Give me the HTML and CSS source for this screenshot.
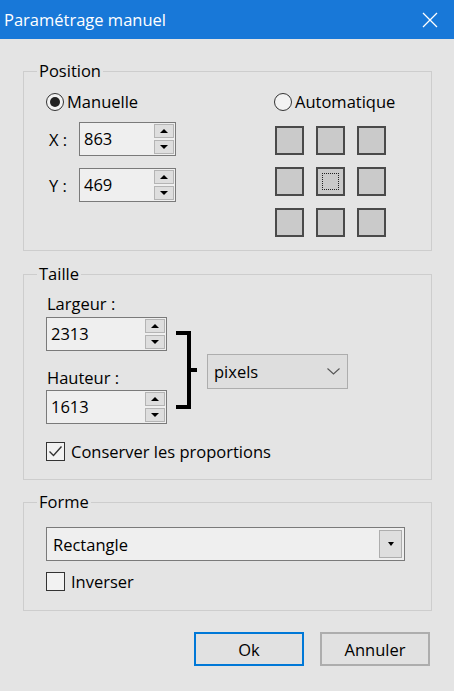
FILE: index.html
```html
<!DOCTYPE html>
<html lang="fr">
<head>
  <meta charset="UTF-8">
  <meta name="viewport" content="width=device-width, initial-scale=1.0">
  <title>Paramétrage manuel</title>
  <link rel="stylesheet" href="styles.css">
</head>
<body>
<div class="window">
  <div class="titlebar">
    <span class="title">Paramétrage manuel</span>
    <svg class="close" width="16" height="16" viewBox="0 0 16 16">
      <path d="M1 1 L15 15 M15 1 L1 15" stroke="#fff" stroke-width="1.3" fill="none" />
    </svg>
  </div>

  <div class="content">
    <!-- Position -->
    <fieldset class="group group-position">
      <legend>Position</legend>
      <div class="group-body position-body">
        <div class="manual">
          <div class="radio checked"><span class="radio-mark"></span>Manuelle</div>
          <div class="coord-row">
            <span class="coord-label">X :</span>
            <div class="spin spin-coord">
              <span class="spin-value">863</span>
              <div class="spin-buttons">
                <span class="spin-btn"><span class="arrow-up"></span></span>
                <span class="spin-btn"><span class="arrow-down"></span></span>
              </div>
            </div>
          </div>
          <div class="coord-row coord-row-y">
            <span class="coord-label">Y :</span>
            <div class="spin spin-coord">
              <span class="spin-value">469</span>
              <div class="spin-buttons">
                <span class="spin-btn"><span class="arrow-up"></span></span>
                <span class="spin-btn"><span class="arrow-down"></span></span>
              </div>
            </div>
          </div>
        </div>
        <div class="auto">
          <div class="radio"><span class="radio-mark"></span>Automatique</div>
          <div class="anchor-grid">
            <span class="anchor"></span>
            <span class="anchor"></span>
            <span class="anchor"></span>
            <span class="anchor"></span>
            <span class="anchor focused"><span class="focus-rect"></span></span>
            <span class="anchor"></span>
            <span class="anchor"></span>
            <span class="anchor"></span>
            <span class="anchor"></span>
          </div>
        </div>
      </div>
    </fieldset>

    <!-- Taille -->
    <fieldset class="group group-size">
      <legend>Taille</legend>
      <div class="group-body">
        <div class="size-row">
          <div class="size-fields">
            <div class="field-label">Largeur :</div>
            <div class="spin spin-size">
              <span class="spin-value">2313</span>
              <div class="spin-buttons">
                <span class="spin-btn"><span class="arrow-up"></span></span>
                <span class="spin-btn"><span class="arrow-down"></span></span>
              </div>
            </div>
            <div class="field-label field-label-second">Hauteur :</div>
            <div class="spin spin-size">
              <span class="spin-value">1613</span>
              <div class="spin-buttons">
                <span class="spin-btn"><span class="arrow-up"></span></span>
                <span class="spin-btn"><span class="arrow-down"></span></span>
              </div>
            </div>
          </div>
          <div class="link">
            <span class="bracket"></span>
            <span class="bracket-tick"></span>
          </div>
          <div class="combo combo-unit">
            <span class="combo-text">pixels</span>
            <svg class="chevron" width="13" height="7" viewBox="0 0 13 7">
              <path d="M0.5 0.5 L6.5 6 L12.5 0.5" stroke="#555" stroke-width="1.1" fill="none" />
            </svg>
          </div>
        </div>
        <div class="check checked">
          <span class="check-box">
            <svg width="17" height="17" viewBox="0 0 17 17">
              <path d="M2.5 8.5 L6.5 12.5 L14.5 3.5" stroke="#333" stroke-width="1.4" fill="none" />
            </svg>
          </span>
          Conserver les proportions
        </div>
      </div>
    </fieldset>

    <!-- Forme -->
    <fieldset class="group group-shape">
      <legend>Forme</legend>
      <div class="group-body">
        <div class="combo combo-shape">
          <span class="combo-text">Rectangle</span>
          <span class="drop-btn"><span class="arrow-down"></span></span>
        </div>
        <div class="check">
          <span class="check-box"></span>
          Inverser
        </div>
      </div>
    </fieldset>
  </div>

  <div class="buttons">
    <button class="btn btn-default">Ok</button>
    <button class="btn">Annuler</button>
  </div>
</div>
</body>
</html>
```

FILE: styles.css
```css
/* Base */
body {
  margin: 0;
  font-family: "Open Sans", "Noto Sans", sans-serif;
  font-size: 16.5px;
  color: #000;
  background-color: #e4e4e4;
}

.window {
  width: 454px;
  height: 691px;
  background-color: #e4e4e4;
}

/* Title bar */
.titlebar {
  height: 39px;
  background-color: #1878d8;
  display: flex;
  align-items: center;
  justify-content: space-between;
  padding: 0 16px 0 4px;
}

.title {
  color: #fff;
  font-size: 16.5px;
}

.close {
  display: block;
  margin-top: 1px;
}

/* Content */
.content {
  padding: 22px 22px 0 23px;
}

.group {
  margin: 0;
  padding: 0 0 0 13px;
  border: 1px solid #cdcdcd;
  min-width: 0;
}

.group legend {
  padding: 0 2px;
  line-height: 20px;
}

.group-body {
  padding-left: 9px;
}

/* Position */
.group-position {
  padding-top: 11px;
  padding-bottom: 13px;
}

.position-body {
  display: flex;
}

.manual {
  width: 228px;
}

.radio {
  display: flex;
  align-items: center;
  height: 20px;
  line-height: 20px;
}

.radio-mark {
  box-sizing: border-box;
  width: 18px;
  height: 18px;
  border: 1px solid #333;
  border-radius: 50%;
  background-color: #f2f2f2;
  margin-right: 3px;
  display: flex;
  align-items: center;
  justify-content: center;
}

.radio.checked .radio-mark::after {
  content: "";
  width: 10px;
  height: 10px;
  border-radius: 50%;
  background-color: #222;
}

.coord-row {
  display: flex;
  align-items: center;
  margin-top: 10px;
}

.coord-row-y {
  margin-top: 12px;
}

.coord-label {
  width: 30px;
  padding-left: 3px;
}

/* Spin boxes */
.spin {
  box-sizing: border-box;
  display: flex;
  height: 34px;
  border: 1px solid #7a7a7a;
  background-color: #efefef;
}

.spin-coord {
  width: 97px;
}

.spin-size {
  width: 121px;
}

.spin-value {
  flex: 1;
  padding-left: 4px;
  line-height: 32px;
}

.spin-buttons {
  display: flex;
  flex-direction: column;
  gap: 2px;
  padding: 1px 1px 1px 0;
}

.spin-btn {
  box-sizing: border-box;
  width: 20px;
  height: 14px;
  border: 1px solid #b4b4b4;
  background-color: #dedede;
  display: flex;
  align-items: center;
  justify-content: center;
}

.arrow-up {
  width: 0;
  height: 0;
  border-left: 4px solid transparent;
  border-right: 4px solid transparent;
  border-bottom: 4px solid #000;
}

.arrow-down {
  width: 0;
  height: 0;
  border-left: 4px solid transparent;
  border-right: 4px solid transparent;
  border-top: 4px solid #000;
}

/* Anchor grid */
.auto {
  width: 130px;
}

.anchor-grid {
  display: grid;
  grid-template-columns: repeat(3, 29px);
  grid-auto-rows: 29px;
  gap: 12px;
  margin: 14px 0 0 1px;
}

.anchor {
  box-sizing: border-box;
  border: 2px solid #4a4a4a;
  background-color: #cacaca;
  display: flex;
  align-items: center;
  justify-content: center;
}

.focus-rect {
  width: 15px;
  height: 15px;
  border: 1px dotted #222;
}

/* Taille */
.group-size {
  margin-top: 13px;
  padding-top: 10px;
  padding-bottom: 18px;
}

.size-row {
  display: flex;
  align-items: flex-start;
}

.field-label {
  line-height: 20px;
  height: 20px;
  margin-bottom: 3px;
  padding-left: 1px;
}

.field-label-second {
  margin-top: 17px;
  margin-bottom: 2px;
}

.link {
  display: flex;
  align-items: center;
  margin: 37px 0 0 9px;
}

.bracket {
  box-sizing: border-box;
  width: 15px;
  height: 78px;
  border: 4px solid #000;
  border-left: none;
}

.bracket-tick {
  width: 6px;
  height: 4px;
  background-color: #000;
}

.combo {
  box-sizing: border-box;
  display: flex;
  align-items: center;
}

.combo-unit {
  width: 141px;
  height: 35px;
  margin: 60px 0 0 10px;
  padding: 0 6px 0 6px;
  border: 1px solid #adadad;
  background-color: #dedede;
  justify-content: space-between;
}

.chevron {
  display: block;
  margin-right: 1px;
}

.check {
  display: flex;
  align-items: center;
  height: 20px;
  margin-top: 17px;
}

.check-box {
  box-sizing: border-box;
  width: 19px;
  height: 19px;
  border: 1px solid #333;
  background-color: #f2f2f2;
  margin-right: 6px;
  display: flex;
  align-items: center;
  justify-content: center;
}

.check-box svg {
  display: block;
}

/* Forme */
.group-shape {
  margin-top: 12px;
  padding-top: 15px;
  padding-bottom: 19px;
}

.combo-shape {
  width: 359px;
  height: 34px;
  border: 1px solid #7a7a7a;
  background-color: #efefef;
  padding: 2px 2px 2px 6px;
}

.combo-shape .combo-text {
  flex: 1;
}

.drop-btn {
  box-sizing: border-box;
  width: 23px;
  height: 28px;
  border: 1px solid #adadad;
  background-color: #dedede;
  display: flex;
  align-items: center;
  justify-content: center;
}

.drop-btn .arrow-down {
  border-left-width: 3px;
  border-right-width: 3px;
}

.group-shape .check {
  margin-top: 10px;
}

/* Buttons */
.buttons {
  display: flex;
  justify-content: flex-end;
  gap: 16px;
  padding: 21px 24px 0 0;
}

.btn {
  box-sizing: border-box;
  width: 110px;
  height: 34px;
  font-family: inherit;
  font-size: 16.5px;
  color: #000;
  background-color: #e1e1e1;
  border: 2px solid #adadad;
  padding: 0;
}

.btn-default {
  border-color: #0078d7;
}
```
